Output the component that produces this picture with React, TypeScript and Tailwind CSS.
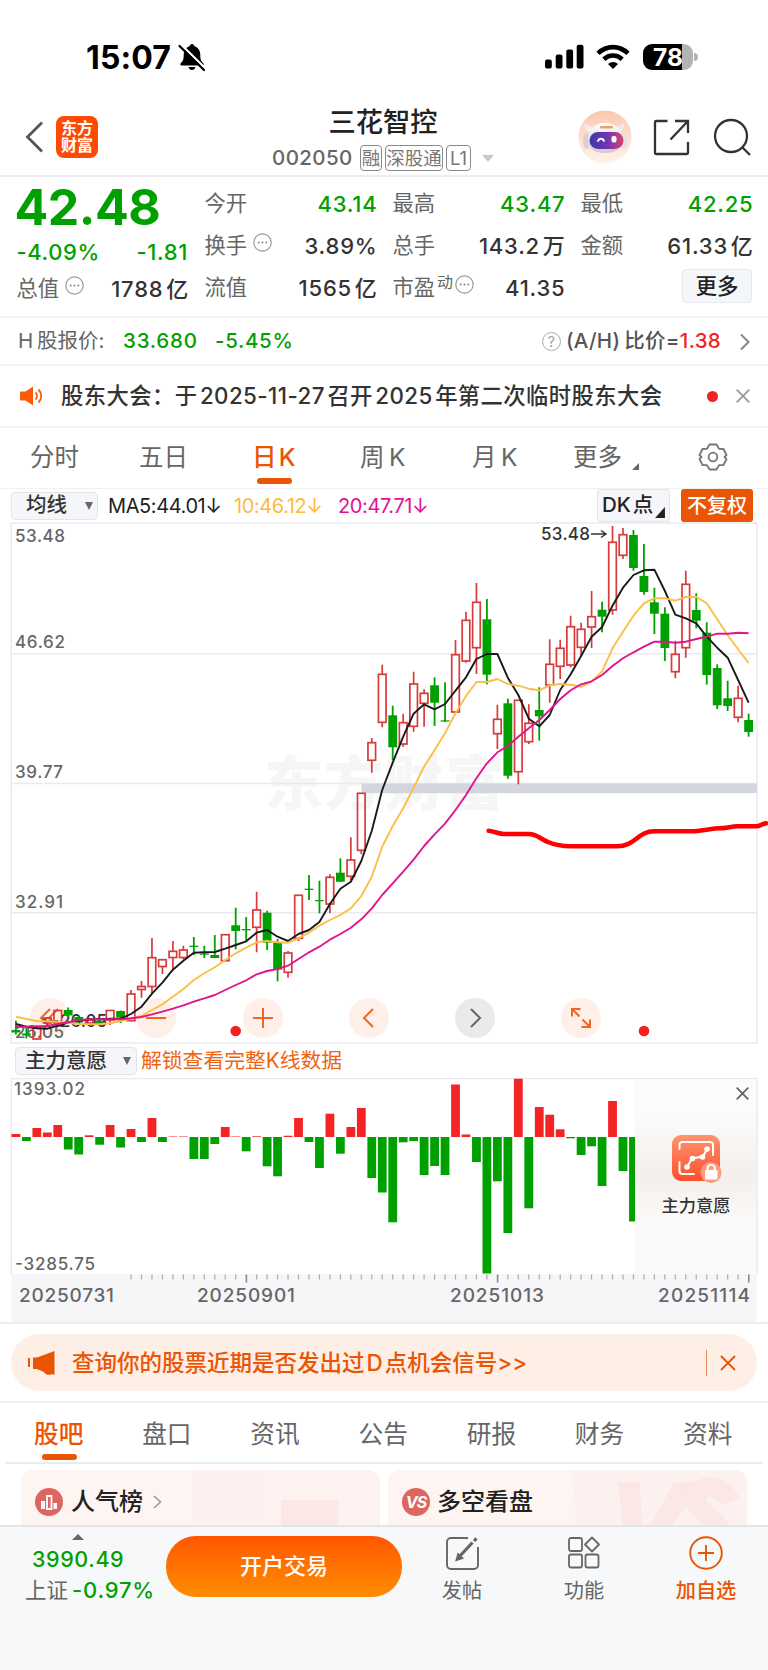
import type { ReactNode } from 'react';

const UP = '#d93a3a';
const DOWN = '#00a000';

const STEP = 10.467;
const cx = (i: number) => 15.9 + i * STEP;

type Candle = ['r' | 'g', number, number, number, number];

// [direction, high, body top, body bottom, low]
const candles: Candle[] = [
  ['g', 1020.7, 1030, 1032.5, 1034.5], ['g', 1028, 1033.5, 1035.5, 1038.5], ['r', 1027, 1028, 1039, 1039.5],
  ['r', 1017, 1018, 1023, 1023], ['r', 1010, 1010.5, 1022.5, 1022.5], ['g', 1007.5, 1010, 1015.5, 1018],
  ['g', 1016, 1017, 1022.5, 1023], ['r', 1018, 1020, 1023, 1024], ['g', 1018, 1021, 1024, 1025],
  ['r', 1010, 1010.5, 1020, 1025], ['g', 1010.5, 1011, 1017.5, 1023], ['r', 990, 994, 1020.7, 1021],
  ['r', 981, 986.5, 989.5, 997.7], ['r', 938, 957.7, 986.5, 993], ['r', 959.7, 959.7, 966.5, 974],
  ['r', 941, 951.3, 957.5, 969], ['r', 945.7, 950, 957.5, 959.5], ['g', 937, 945.7, 947, 955],
  ['g', 945.7, 953.5, 954.7, 958], ['g', 935, 955, 958, 958], ['r', 934.7, 934.7, 960.7, 960.7],
  ['g', 907.7, 925.3, 931, 949.3], ['g', 917, 929, 930.3, 941], ['r', 891.7, 910, 927.3, 952.3],
  ['g', 910.7, 912.7, 942.7, 950], ['g', 939, 942.7, 969.7, 981.3], ['r', 951, 953, 972.3, 977.7],
  ['r', 895.3, 895.3, 938.3, 941], ['g', 875, 888.7, 890, 900], ['g', 880.7, 900, 901.2, 913.3],
  ['r', 874.3, 877.3, 904, 913.3], ['g', 858.3, 872.7, 881.7, 881.7], ['r', 837.3, 860, 876.3, 880],
  ['r', 793.3, 793.3, 850.3, 854.3], ['r', 738, 742.7, 760.3, 772.7], ['r', 664.7, 674.3, 722.3, 727.3],
  ['g', 705.7, 715.3, 747.3, 760], ['r', 713.7, 722.7, 744, 746.7], ['r', 671.7, 684, 726.3, 731.7],
  ['r', 689.3, 693.3, 703.3, 726.7], ['g', 677.3, 685.3, 702.7, 726], ['g', 682.3, 720.3, 721.5, 722],
  ['r', 640, 654.7, 712, 712.5], ['r', 611.7, 620.3, 661, 662.7], ['r', 583, 602.3, 647.7, 674],
  ['g', 599, 619.3, 674.7, 684.3], ['r', 704.7, 719.3, 733.7, 749], ['g', 698.7, 703.3, 775.7, 778.7],
  ['r', 700.3, 700.3, 771.7, 784.3], ['r', 704.3, 723.3, 741.7, 744], ['g', 687.3, 710, 716.3, 740.7],
  ['r', 639.3, 664.3, 685, 702.7], ['r', 639.7, 648.3, 666.3, 679], ['r', 615.7, 626.7, 665, 667.3],
  ['r', 622.7, 629.3, 647.3, 656], ['r', 591, 616.7, 627, 648], ['g', 601.7, 609.7, 616.7, 632.3],
  ['r', 526, 542.3, 610, 614.7], ['r', 528, 534.7, 555.3, 559], ['g', 530, 535, 568, 570.7],
  ['g', 544, 576, 592, 594.7], ['g', 587.7, 602.3, 613.7, 634], ['g', 607.3, 613.7, 648, 661],
  ['r', 640.7, 654.3, 671.7, 678.3], ['r', 570.7, 584.3, 647.7, 657.7], ['g', 593.3, 610, 620.7, 628.3],
  ['g', 622.3, 632.7, 675, 684.7], ['g', 664.3, 668, 705.3, 709], ['g', 680.7, 698.3, 706, 711],
  ['r', 685.7, 698.3, 717.3, 722.3], ['g', 713.7, 720, 732, 736.7],
];

const ma5 = [
  1024, 1026.7, 1028.3, 1028.7, 1025.7, 1022.7, 1020.7, 1019.3, 1019.3, 1018.7, 1018.7, 1014, 1006.7, 993.7, 982.7,
  969.7, 960.7, 952.7, 952.3, 952, 948.7, 945, 941.3, 932.7, 930, 936.7, 941, 934, 930, 922, 904, 888.7, 881.7, 861,
  830.7, 790, 762.7, 736.7, 713.7, 704.3, 709.3, 704, 690.7, 677.3, 659, 654, 654, 677.7, 695, 718.7, 726.3, 715, 690,
  674.3, 656, 636.7, 627, 605.7, 587.7, 575, 570.3, 569.7, 591, 614.7, 618.3, 623.3, 636.7, 647.7, 657.7, 680, 702.7,
];

const ma10 = [
  1016.7, 1019, 1021, 1021.3, 1021.7, 1022.7, 1024, 1024.3, 1024.3, 1023.3, 1021, 1018.7, 1016, 1010, 1004.3, 996.7,
  989, 980, 973.3, 967.3, 960, 953.3, 947.7, 942.3, 941, 942.3, 942.7, 938.3, 932.7, 925.7, 920, 915, 908.3, 896, 876.7,
  846.7, 826, 808.3, 787.7, 766.7, 750, 733.3, 713.3, 696, 682, 682, 679, 684, 685.7, 688.7, 690.3, 685.3, 684, 684.7,
  686.7, 681.7, 671.3, 648.3, 631.7, 615.7, 603.3, 598.3, 598.3, 600.7, 597, 597, 603.3, 619.3, 635.3, 649.3, 663,
];

const ma20 = [
  1027, 1026.7, 1026.3, 1026, 1024, 1022.3, 1020, 1019.5, 1019.3, 1019.3, 1019.3, 1018.3, 1017, 1014.3, 1011.7, 1008.7,
  1005.3, 1001.7, 998.3, 995, 990, 985, 980.3, 974.3, 971, 969, 965.7, 959, 952.3, 946.7, 939.7, 934, 927.7, 919.3,
  908.3, 895, 883.3, 871.7, 859.7, 846, 834.3, 823.7, 810, 795, 778.3, 763.3, 752.3, 746, 736.7, 728.3, 720, 710, 699,
  690.3, 684.3, 681.3, 675, 666, 658.3, 652.3, 646.7, 641.7, 641.7, 642.7, 641.7, 639, 636.7, 633.7, 633.7, 632.7, 633.3,
];

const flow = [
  3, -4, 9, 4.5, 12, -12.5, -17.5, 1.7, -7.7, 12, -10.5, 8, -5, 19, -5, 0.5, 0.5, -22, -22, -7, 10, 0.5, -14.3, 0.7,
  -29.3, -39.3, 1.3, 19, -5, -31, 23.3, -16.7, 10, 29, -41, -55.5, -85.3, -5.3, -4, -38, -29, -38, 52.5, 2.5, -25,
  -136.5, -44.3, -96, 58.3, -71.3, 30, 22.3, 7.7, -1.3, -18, -9.3, -49, 36, -34, -84.5,
];

const toPoints = (ys: number[]) => ys.map((y, i) => `${cx(i).toFixed(1)},${y}`).join(' ');

function StatusBar() {
  return (
    <div className="flex h-[97px] shrink-0 items-start justify-between pt-[39px] pr-[70px] pl-[86px] text-black">
      <div className="flex h-9 items-center">
        <span className="w-[88px] pt-px text-[32px] font-bold tracking-[0.1px] whitespace-nowrap">15:07</span>
        <svg width="30" height="30" viewBox="0 0 30 30" className="ml-[3px]">
          <path
            d="M15 2c1.400 0 2.300 1 2.400 2.300 4 1.200 5.900 4.500 5.900 8.700 0 5 .9 6.300 3 8.300.8.800.3 2.200-.9 2.200H4.600c-1.200 0-1.700-1.400-.9-2.200 2.100-2 3-3.300 3-8.300 0-4.200 1.900-7.500 5.900-8.700C12.700 3 13.600 2 15 2zM11.500 25h7c-.4 1.800-1.800 3-3.500 3s-3.100-1.200-3.500-3z"
            fill="#000"
          />
          <path d="M4 2.500 29 27" stroke="#fff" strokeWidth="2.400" />
          <path d="M2.500 4 27 28" stroke="#000" strokeWidth="2.200" strokeLinecap="round" />
        </svg>
      </div>
      <div className="flex h-9 items-center">
        <svg width="39" height="26" viewBox="0 0 39 26">
          <rect x="0" y="15.500" width="6.800" height="9" rx="2" />
          <rect x="10.700" y="10.500" width="6.800" height="14" rx="2" />
          <rect x="21.300" y="5.500" width="6.800" height="19" rx="2" />
          <rect x="31.700" y="0.800" width="6.800" height="23.700" rx="2" />
        </svg>
        <svg width="34" height="26" viewBox="0 0 34 26" className="ml-[12px]" fill="none" stroke="#000" strokeWidth="4.600">
          <path d="M2 9.300C10.500 1 23.500 1 32 9.300" />
          <path d="M7.800 15.200c5.300-4.900 13.100-4.900 18.400 0" />
          <path d="M17 25l-5-5c2.700-2.700 7.300-2.700 10 0z" fill="#000" stroke="none" />
        </svg>
        <div className="ml-[13px] flex h-[26px] w-[50px] items-center justify-center rounded-[9px] bg-[linear-gradient(90deg,#000_78%,#b3b3b3_78%)] text-[24.500px] leading-none font-bold text-white">
          78
        </div>
        <div className="ml-[1px] h-2 w-[4px] rounded-r-full bg-[#b3b3b3]" />
      </div>
    </div>
  );
}

function Robot() {
  return (
    <svg width="54" height="54" viewBox="0 0 54 54">
      <defs>
        <linearGradient id="halo" x1="0" y1="0" x2="0" y2="1">
          <stop offset="0" stopColor="#fcc8b0" />
          <stop offset="1" stopColor="#fff3ed" />
        </linearGradient>
        <linearGradient id="visor" x1="0" y1="0" x2="1" y2="0">
          <stop offset="0" stopColor="#4038a8" />
          <stop offset="0.5" stopColor="#6b35b5" />
          <stop offset="1" stopColor="#e04070" />
        </linearGradient>
        <linearGradient id="shell" x1="0" y1="0" x2="0" y2="1">
          <stop offset="0" stopColor="#ffffff" />
          <stop offset="1" stopColor="#cfc9cd" />
        </linearGradient>
      </defs>
      <circle cx="27" cy="27" r="26.500" fill="url(#halo)" />
      <path d="M6 13c0 6 3 9 7 10l5-6c-5 0-9-1-12-4zM46 13c0 6-2 9-6 10l-5-6c5 0 8-1 11-4z" fill="#f4ecec" />
      <ellipse cx="8.500" cy="31" rx="3.500" ry="8" fill="#d8d2d6" />
      <ellipse cx="46" cy="31" rx="3.500" ry="8" fill="#e6e0e2" />
      <path d="M27 13c11 0 17 7 17 17 0 9-7 13-17 13S10 39 10 30c0-10 6-17 17-17z" fill="url(#shell)" />
      <rect x="11.500" y="22" width="34" height="17" rx="8.500" fill="url(#visor)" />
      <rect x="22" y="16" width="13" height="2.500" rx="1.200" fill="#f0a060" />
      <path d="M20 31c1-3 5-3 6 0" stroke="#fff" strokeWidth="1.800" fill="none" strokeLinecap="round" />
      <rect x="33.500" y="26" width="5" height="6.500" rx="2" fill="#fff" />
    </svg>
  );
}

function Tag({ children, className }: { children: ReactNode; className: string }) {
  return (
    <span
      className={`flex h-[26px] items-center justify-center rounded-[4px] border-[1.500px] border-[#8a8a8a] text-[18.500px] leading-none text-[#777] ${className}`}
    >
      {children}
    </span>
  );
}

function Header() {
  return (
    <header className="flex h-[80px] shrink-0 items-center border-b-2 border-[#eeeeef] pt-[2px] pr-[17px] pl-[25px]">
      <svg width="19" height="32" viewBox="0 0 19 32" fill="none" stroke="#555" strokeWidth="2.800">
        <path d="M17 1.500 2.500 16 17 30.500" />
      </svg>
      <div className="ml-[12px] flex h-[42px] w-[42px] flex-col items-center justify-center rounded-[8px] bg-[#fe4a05] text-[16px] leading-[17.500px] font-bold text-white">
        <span>东方</span>
        <span>财富</span>
      </div>
      <div className="ml-[174px] flex w-[222px] flex-col items-center pt-[4px]">
        <h1 className="text-[27.300px] leading-[34px] font-medium text-[#222]">三花智控</h1>
        <div className="mt-[4px] flex items-center">
          <span className="w-[88px] text-[20.500px] leading-[28px] font-medium tracking-[0.400px] text-[#666]">002050</span>
          <Tag className="w-[22px]">融</Tag>
          <Tag className="ml-[3px] w-[58px]">深股通</Tag>
          <Tag className="ml-[3px] w-[25px]">L1</Tag>
          <svg width="12" height="7" viewBox="0 0 12 7" className="ml-[11px]">
            <path d="M0 0h12L6 7z" fill="#c8c8c8" />
          </svg>
        </div>
      </div>
      <div className="ml-auto flex items-center">
        <Robot />
        <svg width="37" height="37" viewBox="0 0 37 37" className="ml-[21px]" fill="none" stroke="#333" strokeWidth="2.300">
          <path d="M14.500 2H3.500A1.500 1.500 0 0 0 2 3.500v30A1.500 1.500 0 0 0 3.500 35h30a1.500 1.500 0 0 0 1.500-1.500V23" />
          <path d="M22 2h13v12M35 2 17.500 20.500" />
        </svg>
        <svg width="38" height="38" viewBox="0 0 38 38" className="ml-[23px]" fill="none" stroke="#333" strokeWidth="2.300">
          <circle cx="18" cy="18" r="16" />
          <path d="m29 29 8 8" />
        </svg>
      </div>
    </header>
  );
}

function Dots() {
  return (
    <svg width="19" height="19" viewBox="0 0 19 19" className="mb-2 ml-[6px]">
      <circle cx="9.500" cy="9.500" r="8.700" fill="none" stroke="#999" strokeWidth="1.200" />
      <circle cx="5.700" cy="9.500" r="1" fill="#888" />
      <circle cx="9.500" cy="9.500" r="1" fill="#888" />
      <circle cx="13.300" cy="9.500" r="1" fill="#888" />
    </svg>
  );
}

function Stat({ label, value, green, extra }: { label: string; value: string; green?: boolean; extra?: ReactNode }) {
  return (
    <div className="flex h-[42px] items-center">
      <span className="text-[21.300px] text-[#666]">{label}</span>
      {extra}
      <span className={`-mr-[1.500px] ml-auto text-[22px] font-medium tracking-[0.8px] ${green ? 'text-[#00a000]' : 'text-[#333]'}`}>
        {value}
      </span>
    </div>
  );
}

function Quote() {
  return (
    <section className="flex h-[141px] shrink-0 gap-[16.500px] border-b-2 border-[#f4f4f5] pt-[6px] pr-[15px] pl-[16.500px] whitespace-nowrap">
      <div className="w-[171.500px]">
        <div className="-ml-[2px] flex h-12 items-center text-[50px] leading-none font-bold tracking-[-0.500px] text-[#00a000]">
          42.48
        </div>
        <div className="flex h-[42px] items-center justify-between pt-[1px] text-[22px] font-medium tracking-[0.6px] text-[#00a000]">
          <span>-4.09%</span>
          <span>-1.81</span>
        </div>
        <div className="flex h-[32px] items-center">
          <span className="text-[21.300px] text-[#666]">总值</span>
          <Dots />
          <span className="-mr-[1px] ml-auto text-[22px] font-medium tracking-[0.8px] text-[#333]">1788{'\u200a'}亿</span>
        </div>
      </div>
      <div className="w-[171.500px]">
        <Stat label="今开" value="43.14" green />
        <Stat label="换手" value="3.89%" extra={<Dots />} />
        <Stat label="流值" value={'1565\u200a亿'} />
      </div>
      <div className="w-[171.500px]">
        <Stat label="最高" value="43.47" green />
        <Stat label="总手" value={'143.2\u200a万'} />
        <Stat
          label="市盈"
          value="41.35"
          extra={
            <>
              <span className="mb-3 ml-[2px] text-[16px] text-[#666]">动</span>
              <span className="-ml-[4px] flex">
                <Dots />
              </span>
            </>
          }
        />
      </div>
      <div className="w-[171.500px]">
        <Stat label="最低" value="42.25" green />
        <Stat label="金额" value={'61.33\u200a亿'} />
        <div className="mt-[2px] ml-auto flex h-[34px] w-[70px] items-center justify-center rounded-[4px] border border-[#e6e8ee] bg-[#f5f6f9] text-[21.500px] font-medium text-[#222]">
          更多
        </div>
      </div>
    </section>
  );
}

function HShare() {
  return (
    <div className="flex h-[48px] shrink-0 items-center border-b-2 border-[#f4f4f5] pr-[18px] pl-[18px] pt-[1px] text-[20px]">
      <span className="w-[105px] text-[20.500px] text-[#666]">H{'\u2009'}股报价:</span>
      <span className="w-[92px] text-[20.500px] font-medium tracking-[0.800px] text-[#00a000]">33.680</span>
      <span className="text-[20.500px] font-medium tracking-[0.700px] text-[#00a000]">-5.45%</span>
      <span className="ml-auto flex h-[19px] w-[19px] items-center justify-center rounded-full border border-[#aaa] text-[14px] text-[#999]">
        ?
      </span>
      <span className="ml-[5px] text-[20.500px] font-medium tracking-[0.3px] text-[#555]">
        (A/H){'\u2009'}比价=<span className="text-[#f52020]">1.38</span>
      </span>
      <svg width="10" height="18" viewBox="0 0 10 18" className="ml-[19px]" fill="none" stroke="#888" strokeWidth="2">
        <path d="m1 1.500 7.500 7.500L1 16.500" />
      </svg>
    </div>
  );
}

function Notice() {
  return (
    <div className="flex h-[62px] shrink-0 items-center border-b-2 border-[#f4f4f5] pr-[18px] pl-[20px]">
      <svg width="23" height="20" viewBox="0 0 23 20">
        <path d="M1 5.500h4.500L13 .5v19L5.500 14.500H1a1 1 0 0 1-1-1v-7a1 1 0 0 1 1-1z" fill="#fb5a0a" />
        <path d="M15.500 6.500c2 2 2 5 0 7M18.500 3.500c3.600 3.600 3.600 9.400 0 13" fill="none" stroke="#fb5a0a" strokeWidth="1.800" />
      </svg>
      <span className="ml-[18px] text-[22.300px] font-medium tracking-[0.450px] whitespace-nowrap text-[#333]">
        股东大会：于{'\u200a'}2025-11-27{'\u200a'}召开{'\u200a'}2025{'\u200a'}年第二次临时股东大会
      </span>
      <span className="ml-auto h-[11px] w-[11px] shrink-0 rounded-full bg-[#f52020]" />
      <svg width="14" height="14" viewBox="0 0 14 14" className="ml-[18px] shrink-0" stroke="#999" strokeWidth="1.800">
        <path d="m.7.700 12.600 12.600M13.300.7.700 13.300" />
      </svg>
    </div>
  );
}

function PeriodTabs() {
  return (
    <nav className="flex h-[61px] shrink-0 items-start border-b border-[#f1f1f3] pt-[10px] text-[24.500px] leading-[38px] whitespace-nowrap text-[#666]">
      <span className="ml-[30px] w-[109px]">分时</span>
      <span className="w-[113px]">五日</span>
      <span className="relative w-[108px] font-medium text-[#ea5504]">
        日{'\u200a'}K
        <span className="absolute top-[40px] left-[5px] h-[6px] w-[35px] rounded-[3px] bg-[#ea5504]" />
      </span>
      <span className="w-[112px]">周{'\u2009'}K</span>
      <span className="w-[101px]">月{'\u2009'}K</span>
      <span className="w-[59px]">更多</span>
      <svg width="7" height="7" viewBox="0 0 7 7" className="mt-[25px]">
        <path d="M7 0v7H0z" fill="#666" />
      </svg>
      <svg width="30" height="28" viewBox="0 0 30 28" className="mt-[5px] ml-[59px]" fill="none" stroke="#777" strokeWidth="1.800" strokeLinejoin="round">
        <path d="M11.500 1.500h7l2.500 4.300 4.500.2 3 6-2 2 2 2-3 6-4.500.2-2.500 4.300h-7L9 22.200 4.500 22l-3-6 2-2-2-2 3-6L9 5.800z" />
        <circle cx="15" cy="14" r="4.300" />
      </svg>
    </nav>
  );
}

function MaBar() {
  return (
    <div className="flex h-[33px] shrink-0 items-center pr-[15px] pl-[11px] text-[20px] whitespace-nowrap">
      <div className="flex h-[28px] w-[87px] items-center rounded-[4px] border border-[#e4e5ea] bg-[#f5f6f9] pl-[14px] text-[20.500px] font-medium text-[#333]">
        均线
        <svg width="8" height="8" viewBox="0 0 8 8" className="ml-[18px]">
          <path d="M0 0h8L4 8z" fill="#666" />
        </svg>
      </div>
      <span className="ml-[10px] w-[126px] tracking-[-0.400px] text-[#222]">MA5:44.01↓</span>
      <span className="w-[104px] tracking-[-0.400px] text-[#fdbb3d]">10:46.12↓</span>
      <span className="tracking-[-0.400px] text-[#e3128e]">20:47.71↓</span>
      <div className="relative ml-auto flex h-[33px] w-[73px] items-center rounded-[3px] border border-[#e4e5ea] bg-[#f5f6f9] pl-[4px] text-[20.500px] font-medium text-[#222]">
        DK{'\u200a'}点
        <svg width="10" height="11" viewBox="0 0 9 10" className="absolute right-[4px] bottom-[3px]">
          <path d="M9 0v10H0z" fill="#222" />
        </svg>
      </div>
      <div className="ml-[11px] flex h-[33px] w-[72px] items-center justify-center rounded-[3px] bg-[#ea5504] text-[20px] font-medium text-white">
        不复权
      </div>
    </div>
  );
}

function ChartButton({ gray, children }: { gray?: boolean; children: ReactNode }) {
  return (
    <div
      className={`flex h-10 w-10 items-center justify-center rounded-full ${gray ? 'bg-[#eaeaea] text-[#666]' : 'bg-[#fef0e9] text-[#ee6723]'}`}
    >
      <svg width="22" height="22" viewBox="0 0 22 22" fill="none" stroke="currentColor" strokeWidth="2">
        {children}
      </svg>
    </div>
  );
}

function CandleChart() {
  return (
    <div className="relative h-[522px] shrink-0">
      <div className="absolute top-[476px] left-[30px] flex gap-[66.300px]">
        <ChartButton>
          <path d="m11 2-9 9 9 9M19 2l-9 9 9 9" />
        </ChartButton>
        <ChartButton>
          <path d="M1 11h20" />
        </ChartButton>
        <ChartButton>
          <path d="M1 11h20M11 1v20" />
        </ChartButton>
        <ChartButton>
          <path d="m15 2-9 9 9 9" />
        </ChartButton>
        <ChartButton gray>
          <path d="m7 2 9 9-9 9" />
        </ChartButton>
        <ChartButton>
          <path d="M2 9.500V2h8.500M2 2l7.500 7.500M20 12.500V20h-8.500M20 20l-7.500-7.500" />
        </ChartButton>
      </div>
      <svg width="768" height="522" viewBox="0 522 768 522" className="relative block">
        <text x="264" y="805" fontSize="59" fontWeight="900" fill="#f6f6f7" textLength="240">
          东方财富
        </text>
        <g stroke="#e8eaf0" strokeWidth="1.500" fill="none">
          <rect x="11.300" y="523" width="745.700" height="520" />
          <path d="M11 653.700H757M11 783.500H757M11 912.800H757" />
        </g>
        <rect x="361.500" y="783.500" width="395.500" height="9.700" fill="#d3d6dc" />
        <g fontSize="17" fontWeight="500" fill="#666">
          <text x="15" y="542" textLength="50">53.48</text>
          <text x="15" y="647.500" textLength="50">46.62</text>
          <text x="15" y="778" textLength="48">39.77</text>
          <text x="15" y="907.700" textLength="48">32.91</text>
          <text x="15" y="1038" textLength="49">26.05</text>
        </g>
        <g fontSize="17" fontWeight="500" fill="#333">
          <text x="541" y="540" textLength="49">53.48</text>
          <path d="M591 534h14M601 530.500l5 3.500-5 3.500" stroke="#333" strokeWidth="1.500" fill="none" />
          <text x="60" y="1027" textLength="47">26.05</text>
          <path d="M58 1021H44M48 1017.500l-5 3.500 5 3.500" stroke="#333" strokeWidth="1.500" fill="none" />
        </g>
        {candles.map(([dir, high, top, bottom, low], i) =>
          dir === 'r' ? (
            <g key={i} stroke={UP} strokeWidth="1.700" fill="none">
              <path d={`M${cx(i)} ${high}V${top}M${cx(i)} ${bottom}V${low}`} />
              <rect x={cx(i) - 3.8} y={top} width="7.600" height={bottom - top} />
            </g>
          ) : (
            <g key={i} fill={DOWN}>
              <rect x={cx(i) - 0.9} y={high} width="1.800" height={low - high} />
              <rect x={cx(i) - 4.400} y={top} width="8.800" height={bottom - top} />
            </g>
          ),
        )}
        <g fill="none" strokeWidth="1.900" strokeLinejoin="round">
          <polyline points={toPoints(ma5)} stroke="#1a1a1a" />
          <polyline points={toPoints(ma10)} stroke="#fcbe45" />
          <polyline points={toPoints(ma20)} stroke="#e0148c" />
        </g>
        <path
          d="M488.700 830.700C495 831.500 499 834 504 834H529C537 834 540 839 548 842 556 845.500 562 846.300 571 846.300H617C635 846.300 638 831.300 654 831.300H691C700 831.300 705 829.500 717 828.300 728 828.300 730 826.500 737 826.300H757C761 825.800 762 823.800 766 823.300"
          fill="none"
          stroke="#fe0000"
          strokeWidth="4.600"
          strokeLinecap="round"
        />
        <circle cx="235.700" cy="1031" r="5.300" fill="#f52020" />
        <circle cx="644" cy="1031" r="5.300" fill="#f52020" />
      </svg>
    </div>
  );
}

function FlowChart() {
  return (
    <>
      <div className="flex h-[34px] shrink-0 items-center pl-[15px]">
        <div className="flex h-[28px] w-[122px] items-center rounded-[4px] border border-[#e4e5ea] bg-[#f5f6f9] pl-[9px] text-[20.500px] font-medium text-[#333]">
          主力意愿
          <svg width="8" height="8" viewBox="0 0 8 8" className="ml-[16px]">
            <path d="M0 0h8L4 8z" fill="#666" />
          </svg>
        </div>
        <span className="ml-[4px] text-[20.800px] text-[#ee6410]">解锁查看完整K线数据</span>
      </div>
      <div className="relative h-[246px] shrink-0 border-b-2 border-[#ededf0]">
        <svg width="768" height="244" viewBox="0 1078 768 244" className="block">
          <rect x="11" y="1274" width="746" height="48" fill="#f6f6f9" />
          <path d="M11.300 1274V1078.500H757V1274" fill="none" stroke="#e8eaf0" strokeWidth="1.500" />
          {flow.map((v, i) => (
            <rect
              key={i}
              x={cx(i) - 4.400}
              y={v > 0 ? 1137 - v : 1137}
              width={i === 59 ? 6.200 : 8.800}
              height={Math.abs(v)}
              fill={v > 0 ? '#f52424' : DOWN}
            />
          ))}
          {candles.map((_, i) => {
            if (i < 11) return null;
            const major = i === 22 || i === 46 || i === 70;
            return (
              <rect key={i} x={cx(i) - 0.6} y="1274.500" width={major ? 1.600 : 1.200} height={major ? 8 : 5} fill={major ? '#888' : '#aaa'} />
            );
          })}
          <g fontWeight="500" fill="#666">
            <text x="14" y="1095" fontSize="17" textLength="71">1393.02</text>
            <text x="15" y="1270" fontSize="17" textLength="80">-3285.75</text>
            <text x="19" y="1302" fontSize="19" textLength="95">20250731</text>
            <text x="197" y="1302" fontSize="19" textLength="98">20250901</text>
            <text x="450" y="1302" fontSize="19" textLength="94">20251013</text>
            <text x="658" y="1302" fontSize="19" textLength="92">20251114</text>
          </g>
        </svg>
        <div className="absolute top-[1px] left-[635px] flex h-[195px] w-[121px] flex-col items-center bg-[linear-gradient(180deg,#fbfbfc_18%,#f5efeb_50%,#fbfaf9_72%,#fafafb_100%)] pt-[56px] pl-[1px]">
          <svg width="13" height="13" viewBox="0 0 13 13" className="absolute top-[8px] right-[7px]" stroke="#666" strokeWidth="1.800">
            <path d="m.7.700 11.600 11.600M12.300.7.700 12.300" />
          </svg>
          <svg width="50" height="48" viewBox="0 0 50 48" className="ml-[1px]">
            <defs>
              <linearGradient id="lockbg" x1="0" y1="0" x2="0" y2="1">
                <stop offset="0" stopColor="#ff9470" />
                <stop offset="1" stopColor="#fc4f2c" />
              </linearGradient>
            </defs>
            <rect x="0" y="0" width="48" height="46" rx="9" fill="url(#lockbg)" />
            <g fill="none" stroke="#fff" strokeWidth="2" strokeLinecap="round">
              <path d="M7.500 14V10a3 3 0 0 1 3-3H38a3 3 0 0 1 3 3v10M7.500 27v9a3 3 0 0 0 3 3H22" />
              <path d="m15 32 5-8.500 11-2 4-7.500" />
            </g>
            <g fill="#fff">
              <circle cx="15" cy="32" r="2.800" />
              <circle cx="20.500" cy="23.500" r="2.800" />
              <circle cx="30.500" cy="22" r="2.800" />
              <circle cx="35" cy="14" r="2.800" />
            </g>
            <circle cx="39" cy="37.500" r="10.500" fill="#ff9b7d" />
            <rect x="33" y="35" width="12.500" height="9.500" rx="1.500" fill="#fff" />
            <path d="M35.500 35v-1.500a3.700 3.700 0 0 1 7.400 0V35" fill="none" stroke="#fff" strokeWidth="2" />
          </svg>
          <span className="mt-[11px] text-[17.200px] leading-[24px] font-medium text-[#333]">主力意愿</span>
        </div>
      </div>
    </>
  );
}

function Banner() {
  return (
    <div className="h-[79px] shrink-0 border-b-2 border-[#f1f1f3] px-[11px] pt-[10px]">
      <div className="flex h-[57px] items-center rounded-[28px] bg-[#fdeee6] pr-[21px] pl-[17px] text-[#ea5504]">
        <svg width="27" height="24" viewBox="0 0 27 24" fill="#ea5504">
          <rect x="0" y="7" width="2" height="9" />
          <path d="M5 6.500h4L26.500 0v24L24 23c-1 1.500-7 1-8-2l-7-3H5z" />
        </svg>
        <span className="ml-[17px] text-[22.500px] font-medium whitespace-nowrap">
          查询你的股票近期是否发出过{'\u200a'}D{'\u200a'}点机会信号&gt;&gt;
        </span>
        <span className="ml-auto h-[26px] w-[1.500px] bg-[#ee8a5a]" />
        <svg width="16" height="16" viewBox="0 0 16 16" className="ml-[13px]" stroke="#ea5504" strokeWidth="1.800">
          <path d="m1 1 14 14M15 1 1 15" />
        </svg>
      </div>
    </div>
  );
}

const sections = ['股吧', '盘口', '资讯', '公告', '研报', '财务', '资料'];

function SectionTabs() {
  return (
    <nav className="mx-[5px] flex h-[61px] shrink-0 justify-between border-b-2 border-[#ececee] pt-[12px] pr-[30.500px] pl-[29px] text-[24.700px] leading-[38px] text-[#666]">
      {sections.map((name, i) => (
        <span key={name} className={i === 0 ? 'relative font-medium text-[#ea5504]' : ''}>
          {name}
          {i === 0 && <span className="absolute top-[39px] left-[8px] h-[6px] w-[35px] rounded-[3px] bg-[#ea5504]" />}
        </span>
      ))}
    </nav>
  );
}

function Cards() {
  return (
    <div className="flex h-[61px] shrink-0 gap-[8px] overflow-hidden pt-[6px] pl-[21px]">
      <div className="relative h-[80px] w-[359px] overflow-hidden rounded-[12px] bg-[#fef5f3]">
        <div className="absolute top-0 left-[171px] h-[80px] w-[188px] bg-[#fdf2f0]" />
        <div className="absolute top-0 left-[171px] h-[46px] w-[72px] bg-[#fdf0ee]" />
        <div className="absolute top-[30px] left-[260px] h-[50px] w-[57px] bg-[#fbe7e5]" />
        <div className="relative flex h-[64px] items-center pl-[14px]">
          <svg width="28" height="28" viewBox="0 0 28 28">
            <circle cx="14" cy="14" r="14" fill="#dd6660" />
            <path d="M6 13h4v8H6zM18.500 15h3.500v6h-3.500z" fill="#fff" />
            <path d="M12 8h4.500v13H12z" fill="none" stroke="#fff" strokeWidth="1.800" />
          </svg>
          <span className="ml-[8px] text-[24px] font-medium text-[#222]">人气榜</span>
          <svg width="9" height="14" viewBox="0 0 9 14" className="ml-[10px]" fill="none" stroke="#999" strokeWidth="1.600">
            <path d="m1 1 6.500 6L1 13" />
          </svg>
        </div>
      </div>
      <div className="relative h-[80px] w-[359px] overflow-hidden rounded-[12px] bg-[#fef5f3]">
        <svg width="175" height="60" viewBox="0 0 175 60" className="absolute top-0 right-0">
          <path d="M0 0h175v60H5z" fill="#fdf1ef" />
          <path d="M46 12h22l2 48H51zM102 12h32L96 60H76z" fill="#fbe7e5" />
          <path d="M158 32C150 12 126 14 124 28s18 16 24 32" stroke="#fbe7e5" strokeWidth="20" fill="none" />
        </svg>
        <div className="relative flex h-[64px] items-center pl-[14px]">
          <span className="flex h-[28px] w-[28px] items-center justify-center rounded-full bg-[#dd6660] text-[16px] font-bold tracking-[-1px] text-white italic">
            VS
          </span>
          <span className="ml-[7px] text-[24px] font-medium text-[#222]">多空看盘</span>
        </div>
      </div>
    </div>
  );
}

function BottomBar() {
  return (
    <footer className="flex h-[145px] shrink-0 items-start border-t-2 border-[#e1e4e8] bg-[#f6f8fa] whitespace-nowrap">
      <div className="ml-[25px] flex w-[141px] flex-col pt-[7px]">
        <svg width="12" height="6" viewBox="0 0 12 6" className="ml-[47px]">
          <path d="M6 0l6 6H0z" fill="#666" />
        </svg>
        <span className="mt-[4px] ml-[7px] text-[21.500px] leading-[31px] font-medium tracking-[0.6px] text-[#00a000]">
          3990.49
        </span>
        <span className="text-[21.500px] leading-[31px] text-[#666]">
          上证 <span className="-ml-[2px] text-[22px] font-medium tracking-[0.8px] text-[#00a000]">-0.97%</span>
        </span>
      </div>
      <button className="mt-[9px] h-[61px] w-[236px] rounded-[30px] bg-gradient-to-b from-[#ff5500] to-[#ff8c00] text-[22px] font-medium text-white">
        开户交易
      </button>
      <div className="ml-[30px] flex w-[60px] flex-col items-center pt-[9px] text-[20.200px] leading-[30px] text-[#666]">
        <svg width="34" height="34" viewBox="0 0 34 34" fill="none" stroke="#666" strokeWidth="1.900">
          <path d="M23 2H6a4 4 0 0 0-4 4v23a4 4 0 0 0 4 4h23a4 4 0 0 0 4-4V11" />
          <path d="M14 21 27.500 6.500" strokeWidth="3.200" />
          <path d="m12.500 23 1-3.500 2.500 2.300zM29 5l2.500-2.700" strokeWidth="3.200" />
        </svg>
        <span className="mt-[6px]">发帖</span>
      </div>
      <div className="ml-[62px] flex w-[60px] flex-col items-center pt-[9px] text-[20.200px] leading-[30px] text-[#666]">
        <svg width="34" height="34" viewBox="0 0 34 34" fill="none" stroke="#666" strokeWidth="1.800" strokeLinejoin="round">
          <rect x="2" y="2" width="13" height="13" rx="2" />
          <rect x="2" y="18.500" width="13" height="13" rx="2" />
          <rect x="18.500" y="18.500" width="13" height="13" rx="2" />
          <path d="m25 1.500 7 7-7 7-7-7z" />
        </svg>
        <span className="mt-[6px]">功能</span>
      </div>
      <div className="ml-[62px] flex w-[60px] flex-col items-center pt-[9px] text-[20.200px] leading-[30px] font-medium text-[#ea5504]">
        <svg width="34" height="34" viewBox="0 0 34 34" fill="none" stroke="#ea5504" strokeWidth="1.900">
          <circle cx="17" cy="17" r="15.800" />
          <path d="M9 17h16M17 9v16" />
        </svg>
        <span className="mt-[6px]">加自选</span>
      </div>
    </footer>
  );
}

export default function App() {
  return (
    <div className="flex h-[1670px] w-[768px] flex-col overflow-hidden bg-white font-[Inter,'Noto_Sans_CJK_SC',sans-serif]">
      <StatusBar />
      <Header />
      <Quote />
      <HShare />
      <Notice />
      <PeriodTabs />
      <MaBar />
      <CandleChart />
      <FlowChart />
      <Banner />
      <SectionTabs />
      <Cards />
      <BottomBar />
    </div>
  );
}
